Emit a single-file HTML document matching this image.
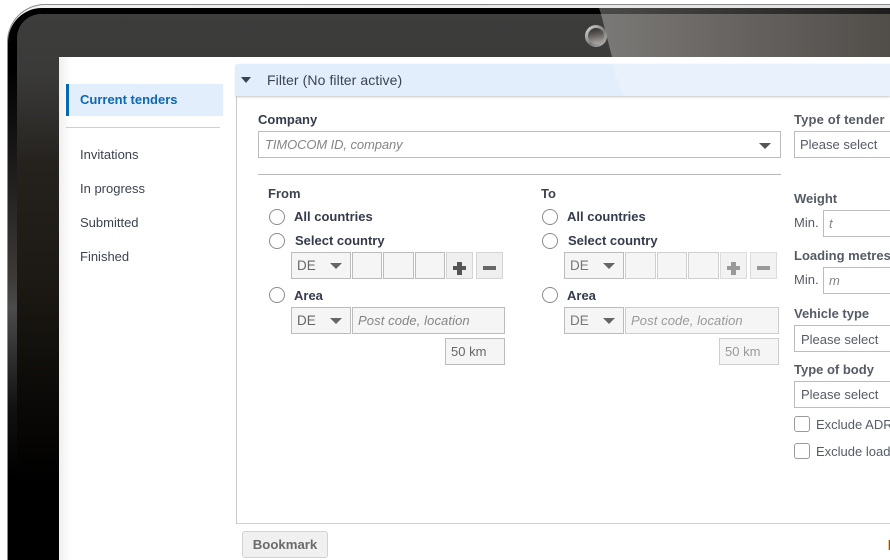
<!DOCTYPE html>
<html>
<head>
<meta charset="utf-8">
<style>
html,body{margin:0;padding:0;width:890px;height:560px;overflow:hidden;background:#fff}
#w{position:absolute;left:0;top:0;width:890px;height:560px;overflow:hidden;font-family:"Liberation Sans",sans-serif;font-size:13px;color:#3c4350}
.a{position:absolute;white-space:nowrap}
.b{font-weight:bold}
.box{position:absolute;box-sizing:border-box;border:1px solid #bcbcbc;background:#fff}
.g{background:#f5f5f5}
.lbl{font-weight:bold;color:#343b4c;font-size:13px;line-height:16px}
.grey{color:#555b66}
.ph{font-style:italic;color:#858585;font-size:13px}
.tri{position:absolute;width:0;height:0;border-left:6px solid transparent;border-right:6px solid transparent;border-top:6px solid #666}
.radio{position:absolute;box-sizing:border-box;width:16px;height:16px;border:1px solid #8b8b8b;border-radius:50%;background:#fff}
.chk{position:absolute;box-sizing:border-box;width:16px;height:16px;border:1px solid #9a9a9a;border-radius:3px;background:#fff}
</style>
</head>
<body>
<div id="w">
<!-- bezel -->
<div class="a" style="left:7px;top:4px;width:883px;height:556px;border-radius:38px 0 0 0;background:#8c8c8c"></div>
<div class="a" style="left:8px;top:5px;width:882px;height:555px;border-radius:37px 0 0 0;background:linear-gradient(90deg,#f2f2f2,#e2e2e2)"></div>
<div class="a" style="left:8px;top:8px;width:882px;height:552px;border-radius:34px 0 0 0;background:linear-gradient(180deg,#000 0,#000 60px,#3d3a38 270px,#4c4c4c 300px,#111 400px,#000 470px)"></div>
<div class="a" style="left:17px;top:14px;width:873px;height:546px;border-radius:24px 0 0 0;background:linear-gradient(180deg,#3d3d3c 0,#3a3a39 60px,#25221e 150px,#1c1914 270px,#0c0a08 380px,#000 470px)"></div>
<!-- top strip right of glare -->
<svg class="a" style="left:0;top:0" width="890" height="57">
<defs><linearGradient id="gl" x1="0" x2="1" y1="0" y2="0"><stop offset="0" stop-color="#7b7977"/><stop offset="0.5" stop-color="#65625f"/><stop offset="1" stop-color="#514e4a"/></linearGradient>
<linearGradient id="gs" x1="0" x2="1" y1="0" y2="0"><stop offset="0" stop-color="#4a4a48"/><stop offset="1" stop-color="#1f1d1b"/></linearGradient></defs>
<polygon points="599,8 890,8 890,14 601,14" fill="url(#gs)"/>
<polygon points="601,14 890,14 890,57 612,57" fill="url(#gl)"/>
</svg>
<!-- camera -->
<div class="a" style="left:585px;top:25px;width:22px;height:22px;border-radius:50%;background:linear-gradient(135deg,#e4e4e4,#7a7a7a 55%,#c4c4c4)"></div>
<div class="a" style="left:588px;top:28px;width:16px;height:16px;border-radius:50%;background:linear-gradient(170deg,#2f2d2d 0,#5c5856 40%,#b6b1ad 100%)"></div>
<!-- screen -->
<div class="a" style="left:59px;top:57px;width:831px;height:503px;background:#fff"></div>
<div class="a" style="left:59px;top:57px;width:12px;height:503px;background:linear-gradient(90deg,#efefef,#fff)"></div>

<!-- sidebar -->
<div class="a" style="left:66px;top:84px;width:157px;height:32px;background:#e2eefb"></div>
<div class="a" style="left:66px;top:84px;width:3px;height:32px;background:#0068b4"></div>
<div class="a b" style="left:80px;top:92px;color:#0e68b0;line-height:16px">Current tenders</div>
<div class="a" style="left:66px;top:127px;width:154px;height:1px;background:#cfcfcf"></div>
<div class="a" style="left:80px;top:147px;line-height:16px">Invitations</div>
<div class="a" style="left:80px;top:181px;line-height:16px">In progress</div>
<div class="a" style="left:80px;top:215px;line-height:16px">Submitted</div>
<div class="a" style="left:80px;top:249px;line-height:16px">Finished</div>

<!-- panel -->
<div class="a" style="left:236px;top:96px;width:654px;height:428px;box-sizing:border-box;border-left:1px solid #c9c9c9;border-bottom:1px solid #cfcfcf"></div>
<div class="a" style="left:236px;top:64px;width:654px;height:32px;background:#e2eefb;box-shadow:0 1px 2px #c4c4c4"></div>
<svg class="a" style="left:612px;top:64px" width="278" height="32"><polygon points="0,0 278,0 278,32 11,32" fill="#fff" opacity=".25"/></svg>
<div class="tri" style="left:241px;top:77px;border-left-width:5.5px;border-right-width:5.5px;border-top-color:#3c4350"></div>
<div class="a" style="left:267px;top:72px;line-height:16px;font-size:14px;letter-spacing:.09px;color:#3c4350">Filter (No filter active)</div>

<!-- company -->
<div class="a lbl" style="left:258px;top:112px">Company</div>
<div class="box" style="left:258px;top:131px;width:523px;height:27px"></div>
<div class="a ph" style="left:265px;top:137px;line-height:15px;letter-spacing:-.1px">TIMOCOM ID, company</div>
<div class="tri" style="left:759px;top:143px;border-top-color:#555"></div>
<div class="a lbl grey" style="left:794px;top:112px;letter-spacing:.15px">Type of tender</div>
<div class="box" style="left:794px;top:131px;width:110px;height:27px"></div>
<div class="a grey" style="left:800px;top:137px;line-height:15px">Please select</div>

<div class="a" style="left:258px;top:174px;width:523px;height:1px;background:#b9b9b9"></div>

<!-- From -->
<div class="a lbl" style="left:268px;top:186px;color:#3c4350">From</div>
<div class="radio" style="left:269px;top:209px"></div>
<div class="a lbl" style="left:294px;top:209px">All countries</div>
<div class="radio" style="left:269px;top:233px"></div>
<div class="a lbl" style="left:295px;top:233px">Select country</div>
<div class="box g" style="left:291px;top:252px;width:60px;height:27px"></div>
<div class="a" style="left:297px;top:258px;line-height:15px;color:#666;font-size:13.5px">DE</div>
<div class="tri" style="left:330px;top:263px"></div>
<div class="box g" style="left:352px;top:252px;width:30px;height:27px"></div>
<div class="box g" style="left:383px;top:252px;width:31px;height:27px"></div>
<div class="box g" style="left:415px;top:252px;width:30px;height:27px"></div>
<div class="box" style="left:446px;top:252px;width:27px;height:27px;background:#efefef;border-color:#d4d4d4"></div>
<div class="a" style="left:453px;top:266px;width:13px;height:4px;background:#555"></div>
<div class="a" style="left:457px;top:262px;width:5px;height:13px;background:#555"></div>
<div class="box" style="left:476px;top:252px;width:27px;height:27px;background:#efefef;border-color:#d4d4d4"></div>
<div class="a" style="left:483px;top:266px;width:13px;height:4px;background:#666"></div>
<div class="radio" style="left:269px;top:287px"></div>
<div class="a lbl" style="left:294px;top:288px">Area</div>
<div class="box g" style="left:291px;top:307px;width:60px;height:27px"></div>
<div class="a" style="left:297px;top:313px;line-height:15px;color:#666;font-size:13.5px">DE</div>
<div class="tri" style="left:330px;top:318px"></div>
<div class="box g" style="left:352px;top:307px;width:153px;height:27px"></div>
<div class="a ph" style="left:358px;top:313px;line-height:15px;letter-spacing:.1px">Post code, location</div>
<div class="box g" style="left:445px;top:338px;width:60px;height:27px"></div>
<div class="a" style="left:451px;top:344px;line-height:15px;color:#666">50 km</div>

<!-- To -->
<div class="a lbl" style="left:541px;top:186px;color:#3c4350">To</div>
<div class="radio" style="left:542px;top:209px"></div>
<div class="a lbl" style="left:567px;top:209px">All countries</div>
<div class="radio" style="left:542px;top:233px"></div>
<div class="a lbl" style="left:568px;top:233px">Select country</div>
<div class="box g" style="left:564px;top:252px;width:60px;height:27px"></div>
<div class="a" style="left:570px;top:258px;line-height:15px;color:#777;font-size:13.5px">DE</div>
<div class="tri" style="left:603px;top:263px"></div>
<div class="box g" style="left:625px;top:252px;width:31px;height:27px;border-color:#cfcfcf"></div>
<div class="box g" style="left:657px;top:252px;width:30px;height:27px;border-color:#cfcfcf"></div>
<div class="box g" style="left:688px;top:252px;width:31px;height:27px;border-color:#cfcfcf"></div>
<div class="box" style="left:720px;top:252px;width:27px;height:27px;background:#f2f2f2;border-color:#dcdcdc"></div>
<div class="a" style="left:727px;top:266px;width:13px;height:4px;background:#999"></div>
<div class="a" style="left:731px;top:262px;width:5px;height:13px;background:#999"></div>
<div class="box" style="left:750px;top:252px;width:27px;height:27px;background:#f2f2f2;border-color:#dcdcdc"></div>
<div class="a" style="left:757px;top:266px;width:13px;height:4px;background:#999"></div>
<div class="radio" style="left:542px;top:287px"></div>
<div class="a lbl" style="left:567px;top:288px">Area</div>
<div class="box g" style="left:564px;top:307px;width:60px;height:27px"></div>
<div class="a" style="left:570px;top:313px;line-height:15px;color:#777;font-size:13.5px">DE</div>
<div class="tri" style="left:603px;top:318px"></div>
<div class="box g" style="left:625px;top:307px;width:154px;height:27px;border-color:#cdcdcd"></div>
<div class="a ph" style="left:631px;top:313px;line-height:15px;color:#999;letter-spacing:.1px">Post code, location</div>
<div class="box g" style="left:719px;top:338px;width:60px;height:27px;border-color:#cdcdcd"></div>
<div class="a" style="left:725px;top:344px;line-height:15px;color:#999">50 km</div>

<!-- right column -->
<div class="a lbl grey" style="left:794px;top:191px">Weight</div>
<div class="a grey" style="left:794px;top:215px;line-height:16px">Min.</div>
<div class="box" style="left:823px;top:210px;width:90px;height:27px"></div>
<div class="a ph" style="left:829px;top:216px;line-height:15px">t</div>
<div class="a lbl grey" style="left:794px;top:248px">Loading metres</div>
<div class="a grey" style="left:794px;top:272px;line-height:16px">Min.</div>
<div class="box" style="left:823px;top:267px;width:90px;height:27px"></div>
<div class="a ph" style="left:829px;top:273px;line-height:15px">m</div>
<div class="a lbl grey" style="left:794px;top:306px">Vehicle type</div>
<div class="box" style="left:794px;top:325px;width:110px;height:27px"></div>
<div class="a grey" style="left:801px;top:332px;line-height:15px">Please select</div>
<div class="a lbl grey" style="left:794px;top:362px">Type of body</div>
<div class="box" style="left:794px;top:381px;width:110px;height:27px"></div>
<div class="a grey" style="left:801px;top:387px;line-height:15px">Please select</div>
<div class="chk" style="left:794px;top:416px"></div>
<div class="a grey" style="left:816px;top:417px;line-height:16px">Exclude ADR</div>
<div class="chk" style="left:794px;top:443px"></div>
<div class="a grey" style="left:816px;top:444px;line-height:16px">Exclude load</div>

<!-- bookmark -->
<div class="a" style="left:242px;top:531px;width:86px;height:27px;box-sizing:border-box;border:1px solid #d2d2d2;border-radius:3px;background:#f0f0f0;text-align:center;font-weight:bold;color:#6a6a6a;line-height:25px;font-size:13.2px">Bookmark</div>
<div class="a" style="left:888px;top:540px;width:1px;height:10px;background:#eccb7e"></div>
<div class="a" style="left:889px;top:540px;width:1px;height:10px;background:#6a4f8c"></div>
</div>
</body>
</html>
